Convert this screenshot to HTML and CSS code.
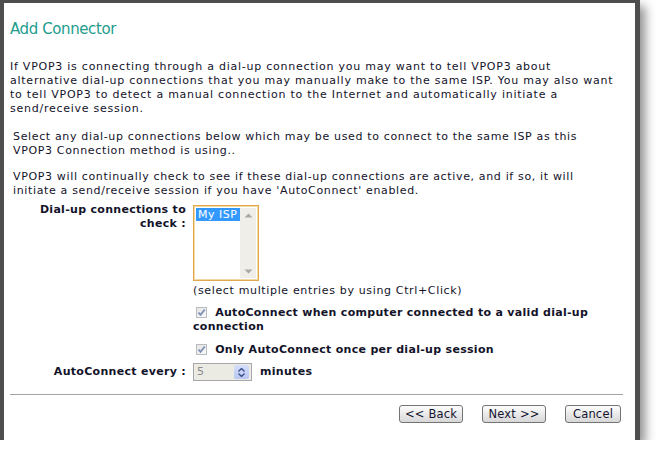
FILE: index.html
```html
<!DOCTYPE html>
<html>
<head>
<meta charset="utf-8">
<link rel="stylesheet" href="styles.css">
</head>
<body>
<div class="window">
  <h1 class="title">Add Connector</h1>
  <p class="intro">If VPOP3 is connecting through a dial-up connection you may want to tell VPOP3 about<br>alternative dial-up connections that you may manually make to the same ISP. You may also want<br>to tell VPOP3 to detect a manual connection to the Internet and automatically initiate a<br>send/receive session.</p>
  <div class="content">
    <p class="para">Select any dial-up connections below which may be used to connect to the same ISP as this<br>VPOP3 Connection method is using..</p>
    <p class="para para2">VPOP3 will continually check to see if these dial-up connections are active, and if so, it will<br>initiate a send/receive session if you have 'AutoConnect' enabled.</p>
    <div class="form">
      <div class="label">Dial-up connections to<br>check :</div>
      <div class="control">
        <div class="listbox">
          <div class="options"><div class="option selected">My ISP</div></div>
          <div class="scrollbar">
            <svg class="arrow" width="9" height="5" viewBox="0 0 9 5"><path d="M0.5 4.5 L4.5 0.5 L8.5 4.5 Z" fill="#a8a8a8"/></svg>
            <svg class="arrow" width="9" height="5" viewBox="0 0 9 5"><path d="M0.5 0.5 L4.5 4.5 L8.5 0.5 Z" fill="#a8a8a8"/></svg>
          </div>
        </div>
        <div class="hint">(select multiple entries by using Ctrl+Click)</div>
        <div class="check"><span class="box"><svg width="9" height="9" viewBox="0 0 9 9"><path d="M1.5 4.5 L3.5 6.8 L7.8 1.5" fill="none" stroke="#7b8fb8" stroke-width="1.8"/></svg></span> AutoConnect when computer connected to a valid dial-up<br>connection</div>
        <div class="check check2"><span class="box"><svg width="9" height="9" viewBox="0 0 9 9"><path d="M1.5 4.5 L3.5 6.8 L7.8 1.5" fill="none" stroke="#7b8fb8" stroke-width="1.8"/></svg></span> Only AutoConnect once per dial-up session</div>
      </div>
      <div class="label label2">AutoConnect every :</div>
      <div class="control spinrow">
        <div class="spin">
          <span class="value">5</span>
          <span class="spinbtn">
            <svg width="7" height="4" viewBox="0 0 7 4"><path d="M0.5 3.5 L3.5 0.5 L6.5 3.5" fill="none" stroke="#3a4f8c" stroke-width="1.4"/></svg>
            <svg width="7" height="4" viewBox="0 0 7 4"><path d="M0.5 0.5 L3.5 3.5 L6.5 0.5" fill="none" stroke="#3a4f8c" stroke-width="1.4"/></svg>
          </span>
        </div>
        <span class="unit">minutes</span>
      </div>
    </div>
  </div>
  <div class="rule"></div>
  <div class="buttons">
    <span class="btn btn-wide">&lt;&lt; Back</span>
    <span class="btn btn-wide">Next &gt;&gt;</span>
    <span class="btn btn-cancel">Cancel</span>
  </div>
</div>
</body>
</html>
```
FILE: styles.css
```css
html, body {
  margin: 0;
  padding: 0;
  background: #ffffff;
}
body {
  font-family: "DejaVu Sans", Verdana, sans-serif;
  font-size: 11px;
  line-height: 14px;
  letter-spacing: 0.65px;
  color: #13132a;
}
.window {
  box-sizing: border-box;
  width: 640px;
  height: 440px;
  background: #ffffff;
  border-left: 4px solid #4e4e4e;
  border-top: 3px solid #4e4e4e;
  border-right: 5px solid #4e4e4e;
  box-shadow: 5px 6px 10px rgba(0, 0, 0, 0.45);
  padding: 0 8px 0 6px;
  white-space: nowrap;
}
.title {
  margin: 17px 0 0 0;
  font-size: 15px;
  line-height: 18px;
  font-weight: normal;
  letter-spacing: -0.4px;
  color: #239c8e;
}
.intro {
  margin: 22px 0 0 0;
  letter-spacing: 0.75px;
}
.content {
  padding-left: 3px;
}
.para {
  margin: 14px 0 0 0;
}
.para2 {
  margin-top: 12px;
}
.form {
  display: grid;
  grid-template-columns: 173px 1fr;
  column-gap: 7px;
  margin-top: 5px;
}
.label {
  font-weight: bold;
  letter-spacing: 0.3px;
  text-align: right;
}
.label2 {
  margin-top: 8px;
}
.control {
  min-width: 0;
}
.listbox {
  box-sizing: border-box;
  width: 66px;
  height: 76px;
  margin-top: 2px;
  border: 1px solid #e2a850;
  box-shadow: inset 0 0 0 1px #f6d8a4;
  display: flex;
  padding: 2px;
}
.options {
  flex: 1;
}
.option {
  font-size: 11px;
  line-height: 13px;
  letter-spacing: 0.5px;
  padding: 0 2px;
}
.option.selected {
  background: #3399ff;
  color: #ffffff;
}
.scrollbar {
  width: 16px;
  background: #efeee8;
  display: flex;
  flex-direction: column;
  justify-content: space-between;
  align-items: center;
  padding: 5px 0 4px;
}
.arrow {
  display: block;
}
.hint {
  margin-top: 3px;
}
.check {
  font-weight: bold;
  letter-spacing: 0.3px;
  margin-top: 8px;
}
.check2 {
  margin-top: 9px;
}
.box {
  display: inline-flex;
  align-items: center;
  justify-content: center;
  box-sizing: border-box;
  width: 11px;
  height: 11px;
  margin-left: 3px;
  margin-right: 4px;
  vertical-align: -1px;
  border: 1px solid #b9bcc2;
  background: linear-gradient(135deg, #e4e4e0, #fafaf8);
}
.box svg {
  display: block;
}
.spinrow {
  display: flex;
  align-items: center;
  gap: 8px;
  margin-top: 6px;
}
.spin {
  box-sizing: border-box;
  width: 59px;
  height: 18px;
  border: 1px solid #a7a6aa;
  background: #ebebe4;
  display: flex;
  align-items: center;
  justify-content: space-between;
  padding: 0 2px 0 3px;
}
.value {
  color: #8a8a8a;
}
.spinbtn {
  box-sizing: border-box;
  width: 15px;
  height: 14px;
  border-radius: 2px;
  background: linear-gradient(#d6defa, #b8c6f2);
  display: flex;
  flex-direction: column;
  justify-content: space-around;
  align-items: center;
  padding: 2px 0;
}
.spinbtn svg {
  display: block;
}
.unit {
  font-weight: bold;
  letter-spacing: 0.3px;
}
.rule {
  height: 1px;
  background: #a3a3a3;
  margin-top: 13px;
  margin-right: 4px;
}
.buttons {
  display: flex;
  justify-content: flex-end;
  gap: 19px;
  margin-top: 10px;
  padding-right: 6px;
}
.btn {
  box-sizing: border-box;
  height: 18px;
  line-height: 16px;
  padding: 0;
  text-align: center;
  border: 1px solid #747474;
  border-radius: 3px;
  background: linear-gradient(#fdfdfd, #e6e6e6 60%, #d7d7d7);
  font-size: 11.5px;
  letter-spacing: 0.2px;
  color: #141430;
}
.btn-wide {
  width: 64px;
}
.btn-cancel {
  width: 56px;
}
```
